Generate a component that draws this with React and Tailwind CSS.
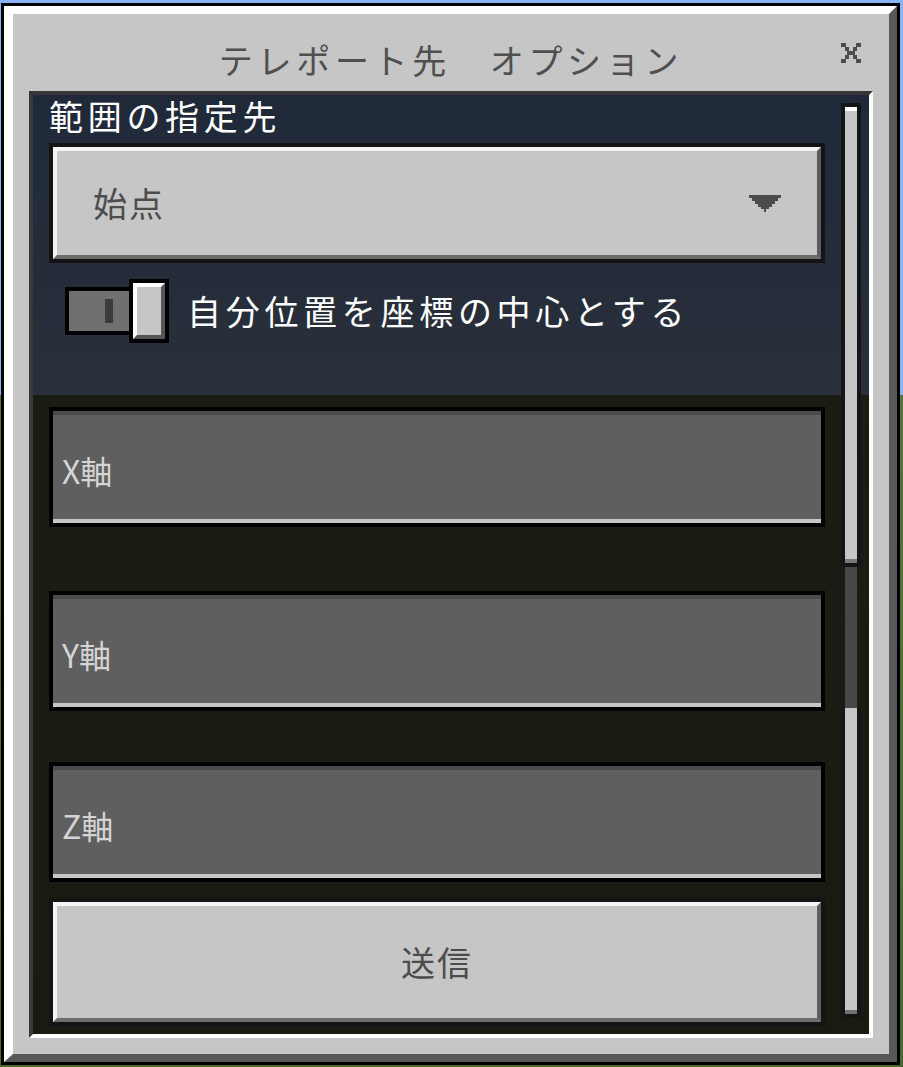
import React from 'react';

const font = "font-['Noto_Sans_CJK_JP','Noto_Sans',sans-serif]";

function CloseIcon() {
    // pixel-style X
    return (
        <svg width="20" height="20" viewBox="0 0 20 20" className="block">
            <g fill="#4c4c4c">
                <rect x="0" y="0" width="5" height="4" />
                <rect x="15" y="0" width="5" height="4" />
                <rect x="4" y="4" width="4" height="4" />
                <rect x="12" y="4" width="4" height="4" />
                <rect x="6" y="8" width="8" height="4" />
                <rect x="4" y="12" width="4" height="4" />
                <rect x="12" y="12" width="4" height="4" />
                <rect x="0" y="16" width="5" height="4" />
                <rect x="15" y="16" width="5" height="4" />
            </g>
        </svg>
    );
}

function DropArrow() {
    return (
        <svg width="32" height="17" viewBox="0 0 32 17" className="block">
            <path
                fill="#4c4c4c"
                d="M0 0H32V3H29V6H26V9H23V12H20V14H17V17H15V14H12V12H9V9H6V6H3V3H0Z"
            />
        </svg>
    );
}

function InputField({ label, className = '' }) {
    return (
        <div className={`h-[120px] border-4 border-black bg-[#5f5f5f] ${className}`}>
            <div className="h-full border-t-4 border-b-4 border-t-[#4a4a4a] border-b-[#c6c6c6] flex items-center pl-[9px] pt-[5px]">
                <span className="text-[32px] leading-none text-[#d4d4d4]">{label}</span>
            </div>
        </div>
    );
}

export default function App() {
    return (
        <div className={`w-[903px] h-[1067px] pt-[3px] pl-[1px] bg-[linear-gradient(to_bottom,#8ab2f7_0%,#8ab2f7_37%,#55753a_37%,#4a6730_100%)] ${font}`}>
            <div className="w-[899px] h-[1062px] border-[3px] border-black">
                <div className="h-full flex flex-col bg-[#c6c6c6] border-t-[8px] border-l-[9px] border-b-[8px] border-r-[8px] border-t-white border-l-white border-b-[#585858] border-r-[#585858]">
                    {/* Title bar */}
                    <div className="relative h-[77px] flex justify-center pt-[29px]">
                        <h1 className="text-[34px] leading-none tracking-[4.7px] text-[#4f4f4f] font-normal">
                            テレポート先　オプション
                        </h1>
                        <button className="absolute right-[28px] top-[29px]">
                            <CloseIcon />
                        </button>
                    </div>

                    {/* Panel */}
                    <div className="mx-4 mb-4 flex-1 border-t-4 border-l-4 border-b-4 border-r-4 border-t-[#373737] border-l-[#373737] border-b-white border-r-white">
                        <div className="h-full flex bg-[linear-gradient(to_bottom,#1f2939_0px,#2a303b_300px,#1a1d14_300px,#181b12_100%)]">
                            {/* Content column */}
                            <div className="w-[792px] pl-4 pt-1 flex flex-col">
                                <div className="text-[34px] leading-none tracking-[4.7px] text-white h-[34px]">
                                    範囲の指定先
                                </div>

                                {/* Dropdown */}
                                <div className="mt-[10px] h-[120px] border-4 border-[#141414]">
                                    <div className="h-full flex items-center justify-between bg-[#c6c6c6] border-t-4 border-l-4 border-b-4 border-r-4 border-t-[#f4f4f4] border-l-[#f4f4f4] border-b-[#6b6b6b] border-r-[#5c5c5c] pl-[36px] pr-[36px]">
                                        <span className="text-[34px] leading-none tracking-[2px] text-[#4c4c4c]">始点</span>
                                        <DropArrow />
                                    </div>
                                </div>

                                {/* Toggle */}
                                <div className="mt-4 h-16 flex items-center pl-4">
                                    <div className="w-[68px] h-12 border-4 border-black bg-[#707070] pl-[36px] pt-2">
                                        <div className="w-2 h-6 bg-[#3c3c3c]" />
                                    </div>
                                    <div className="-ml-1 w-10 h-16 border-4 border-black">
                                        <div className="h-full bg-[#c6c6c6] border-t-4 border-l-4 border-b-4 border-r-4 border-t-white border-l-white border-b-[#555555] border-r-[#555555]" />
                                    </div>
                                    <span className="ml-[18px] text-[34px] leading-none tracking-[4.7px] text-white">
                                        自分位置を座標の中心とする
                                    </span>
                                </div>

                                <InputField label="X軸" className="mt-16" />
                                <InputField label="Y軸" className="mt-16" />
                                <InputField label="Z軸" className="mt-[51px]" />

                                {/* Submit */}
                                <div className="mt-4 h-[128px] border-4 border-[#141414]">
                                    <div className="h-full flex items-center justify-center bg-[#c6c6c6] border-t-4 border-l-4 border-b-4 border-r-4 border-t-[#f4f4f4] border-l-[#f4f4f4] border-b-[#6e6e6e] border-r-[#5e5e5e]">
                                        <span className="text-[34px] leading-none tracking-[2px] text-[#4c4c4c]">送信</span>
                                    </div>
                                </div>
                            </div>

                            {/* Scrollbar */}
                            <div className="ml-4 w-5 pt-2 flex flex-col">
                                <div className="h-[464px] border-4 border-[#151515]">
                                    <div className="h-full bg-[#c6c6c6] border-t-4 border-b-4 border-t-white border-b-[#7a7a7a]" />
                                </div>
                                <div className="mx-1 h-[141px] bg-[#474747]" />
                                <div className="h-[310px] border-x-4 border-b-4 border-[#151515]">
                                    <div className="h-full bg-[#c6c6c6] border-b-4 border-b-[#707070]" />
                                </div>
                            </div>
                        </div>
                    </div>
                </div>
            </div>
        </div>
    );
}
